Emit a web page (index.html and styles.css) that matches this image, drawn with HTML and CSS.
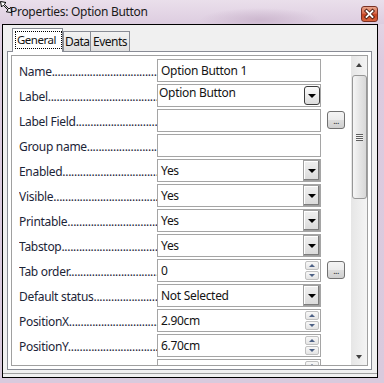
FILE: index.html
```html
<!DOCTYPE html>
<html lang="en">

<head>
    <meta charset="UTF-8">
    <title>Properties: Option Button</title>
    <link rel="stylesheet" href="styles.css">
</head>

<body>
    <div class="window">
        <svg class="cursor" width="12" height="20" viewBox="0 0 12 20">
            <path d="M0.5 0.5 L6 1.5 L4.2 3.3 L9 8.1 L10.8 6.3 L11.5 11.5 L6.3 10.8 L8.1 9 L3.3 4.2 L1.5 6 Z" fill="#fff" stroke="#000" stroke-width="1"/>
        </svg>

        <div class="titlebar">
            <span class="title">Properties: Option Button</span>
            <span class="close">
                <svg width="15" height="14" viewBox="0 0 15 14">
                    <path d="M4.5 4 L10.5 10 M10.5 4 L4.5 10" stroke="#4a1a10" stroke-width="3.6" stroke-linecap="square"/>
                    <path d="M4.5 4 L10.5 10 M10.5 4 L4.5 10" stroke="#fff" stroke-width="1.8" stroke-linecap="square"/>
                </svg>
            </span>
        </div>

        <div class="client">
            <div class="tabs">
                <div class="tab active"><span class="focus">General</span></div>
                <div class="tab data">Data</div>
                <div class="tab events">Events</div>
            </div>

            <div class="panel">
                <div class="viewport">
                    <div class="rows">
                        <div class="row">
                            <span class="label">Name</span>
                            <div class="field"><span class="value">Option Button 1</span></div>
                        </div>
                        <div class="row">
                            <span class="label">Label</span>
                            <div class="field combo"><span class="value">Option Button</span><span class="combobtn"><i class="down"></i></span></div>
                        </div>
                        <div class="row">
                            <span class="label">Label Field</span>
                            <div class="field"><span class="value"></span></div>
                            <span class="more">...</span>
                        </div>
                        <div class="row">
                            <span class="label">Group name</span>
                            <div class="field"><span class="value"></span></div>
                        </div>
                        <div class="row">
                            <span class="label">Enabled</span>
                            <div class="field"><span class="value">Yes</span><span class="dropbtn"><i class="down"></i></span></div>
                        </div>
                        <div class="row">
                            <span class="label">Visible</span>
                            <div class="field"><span class="value">Yes</span><span class="dropbtn"><i class="down"></i></span></div>
                        </div>
                        <div class="row">
                            <span class="label">Printable</span>
                            <div class="field"><span class="value">Yes</span><span class="dropbtn"><i class="down"></i></span></div>
                        </div>
                        <div class="row">
                            <span class="label">Tabstop</span>
                            <div class="field"><span class="value">Yes</span><span class="dropbtn"><i class="down"></i></span></div>
                        </div>
                        <div class="row">
                            <span class="label">Tab order</span>
                            <div class="field"><span class="value">0</span><span class="spin"><b class="up"></b><b class="dn"></b></span></div>
                            <span class="more">...</span>
                        </div>
                        <div class="row">
                            <span class="label">Default status</span>
                            <div class="field"><span class="value">Not Selected</span><span class="dropbtn"><i class="down"></i></span></div>
                        </div>
                        <div class="row">
                            <span class="label">PositionX</span>
                            <div class="field"><span class="value">2.90cm</span><span class="spin"><b class="up"></b><b class="dn"></b></span></div>
                        </div>
                        <div class="row">
                            <span class="label">PositionY</span>
                            <div class="field"><span class="value">6.70cm</span><span class="spin"><b class="up"></b><b class="dn"></b></span></div>
                        </div>
                        <div class="row partial">
                            <span class="label"></span>
                            <div class="field"><span class="value"></span><span class="spin"><b class="up"></b><b class="dn"></b></span></div>
                        </div>
                    </div>

                    <div class="scrollbar">
                        <span class="sbtn"><i class="tri-up"></i></span>
                        <span class="thumb"><span class="grip"></span></span>
                        <span class="track"></span>
                        <span class="sbtn"><i class="tri-down"></i></span>
                    </div>
                </div>
            </div>
        </div>
    </div>
</body>

</html>
```

FILE: styles.css
```css
body {
    margin: 0;
    width: 384px;
    height: 383px;
    overflow: hidden;
    background: #dccfe0;
    font-family: 'Noto Sans', sans-serif;
    font-size: 12px;
    letter-spacing: -0.3px;
}

.window {
    position: relative;
    height: 383px;
    background: linear-gradient(to bottom, #e6dae8 0, #dccbdf 60px, #d9cadd 100%);
}

.cursor {
    position: absolute;
    left: 0;
    top: 1px;
}

.titlebar {
    height: 24px;
    display: flex;
    align-items: flex-start;
    padding-left: 10px;
    background: radial-gradient(ellipse 60px 12px at 260px 20px, #cdb8cf, transparent),
        linear-gradient(to bottom, #eadfeb, #ddcde0);
}

.title {
    margin-top: 3px;
    color: #1a1a1a;
}

.close {
    margin-left: auto;
    margin-right: 6px;
    margin-top: 6px;
    width: 17px;
    height: 16px;
    box-sizing: border-box;
    border: 1px solid #7a3024;
    border-radius: 3px;
    background: linear-gradient(to bottom, #eaa48c 0, #d86a4c 45%, #c4401f 55%, #d9643e 100%);
    display: flex;
    align-items: center;
    justify-content: center;
}

.client {
    margin-left: 2px;
    width: 376px;
    height: 354px;
    box-sizing: border-box;
    border: 1px solid #000;
    background: #f0f0f0;
    box-shadow: inset 0 -3px 0 #f0f0f0, inset 0 -4px 0 #a0a0a0;
}

.tabs {
    display: flex;
    align-items: flex-end;
    margin-top: 3px;
    padding-left: 9px;
    height: 23px;
}

.tab {
    box-sizing: border-box;
    height: 20px;
    border: 1px solid #898c95;
    border-bottom: none;
    background: linear-gradient(to bottom, #f2f2f2, #e0e0e0);
    color: #111;
    padding-left: 1px;
    line-height: 19px;
    white-space: nowrap;
    letter-spacing: -0.5px;
}

.tab.active {
    position: relative;
    z-index: 1;
    height: 24px;
    margin-bottom: -1px;
    width: 51px;
    background: #fff;
    padding: 2px 0 0 2px;
}

.focus {
    display: block;
    width: 47px;
    height: 18px;
    box-sizing: border-box;
    border: 1px dotted #000;
    line-height: 16px;
    padding-left: 1px;
    font-size: 11.5px;
}

.tab.data {
    width: 28px;
}

.tab.events {
    width: 40px;
    margin-left: -1px;
    padding-left: 2px;
}

.panel {
    margin-left: 4px;
    width: 365px;
    height: 319px;
    box-sizing: border-box;
    border: 1px solid #898c95;
    background: #fff;
    padding: 3px;
}

.viewport {
    display: flex;
    height: 311px;
    box-sizing: border-box;
    border: 1px solid #a0a0a0;
    overflow: hidden;
    background: #fff;
}

.rows {
    flex: 1;
    display: flex;
    flex-direction: column;
    gap: 2px;
    padding: 3px 0 0 7px;
}

.row {
    display: flex;
    align-items: flex-start;
    height: 23px;
    flex-shrink: 0;
}

.label {
    width: 138px;
    box-sizing: border-box;
    padding: 3px 3px 0 0;
    line-height: 20px;
    white-space: nowrap;
    overflow: hidden;
    color: #1c2538;
}

.label::after {
    content: '..........................................................';
}

.partial .label::after {
    content: '';
}

.field {
    width: 164px;
    height: 23px;
    box-sizing: border-box;
    border: 1px solid #a5a5a5;
    background: #fff;
    display: flex;
}

.value {
    flex: 1;
    padding-left: 3px;
    line-height: 21px;
    color: #141414;
    white-space: nowrap;
}

.combo .value {
    padding-left: 1px;
    line-height: 15px;
}

.combobtn {
    width: 16px;
    height: 19px;
    margin: 1px 0;
    box-sizing: border-box;
    border: 1px solid #3c3c3c;
    border-radius: 3px;
    background: linear-gradient(to bottom, #fbfbfb, #dcdcdc);
    display: flex;
    align-items: center;
    justify-content: center;
}

.dropbtn {
    width: 17px;
    box-sizing: border-box;
    border: 1px solid #a0a0a0;
    box-shadow: inset -1px -1px 0 #7c7c7c, inset 1px 1px 0 #fff;
    background: linear-gradient(to bottom, #f0f0f0, #dadada);
    display: flex;
    align-items: center;
    justify-content: center;
}

.down {
    width: 0;
    height: 0;
    border-left: 4px solid transparent;
    border-right: 4px solid transparent;
    border-top: 4px solid #000;
}

.spin {
    width: 14px;
    margin: 1px 1px 1px 0;
    display: flex;
    flex-direction: column;
    gap: 1px;
}

.spin b {
    flex: 1;
    box-sizing: border-box;
    border: 1px solid #c0c0c0;
    border-radius: 2px;
    background: linear-gradient(to bottom, #f8f8f8, #e4e4e4);
    display: flex;
    align-items: center;
    justify-content: center;
}

.spin b::before {
    content: '';
    border-left: 3px solid transparent;
    border-right: 3px solid transparent;
}

.spin .up::before {
    border-bottom: 3px solid #4d6185;
}

.spin .dn::before {
    border-top: 3px solid #4d6185;
}

.more {
    width: 18px;
    height: 18px;
    margin: 2px 0 0 6px;
    box-sizing: border-box;
    border: 1px solid #707070;
    border-radius: 3px;
    background: linear-gradient(to bottom, #f4f4f4 0, #ebebeb 50%, #dddddd 51%, #cfcfcf 100%);
    font-size: 9px;
    line-height: 17px;
    text-align: center;
    color: #222;
    letter-spacing: -0.5px;
}

.scrollbar {
    width: 16px;
    display: flex;
    flex-direction: column;
    background: linear-gradient(to right, #e6e6e6, #f4f4f4);
}

.sbtn {
    height: 17px;
    flex-shrink: 0;
    display: flex;
    align-items: center;
    justify-content: center;
}

.tri-up {
    border-left: 3px solid transparent;
    border-right: 3px solid transparent;
    border-bottom: 4px solid #404040;
}

.tri-down {
    border-left: 3px solid transparent;
    border-right: 3px solid transparent;
    border-top: 4px solid #404040;
}

.thumb {
    margin: 2px 0 0 1px;
    width: 15px;
    height: 124px;
    box-sizing: border-box;
    border: 1px solid #979797;
    border-radius: 3px;
    background: linear-gradient(to right, #f6f6f6, #e6e6e6 50%, #d8d8d8);
    display: flex;
    align-items: center;
    justify-content: center;
}

.grip {
    width: 7px;
    height: 7px;
    background: repeating-linear-gradient(to bottom, #5e5e5e 0, #5e5e5e 1px, #f4f4f4 1px, #f4f4f4 2px);
}

.track {
    flex: 1;
}
```
